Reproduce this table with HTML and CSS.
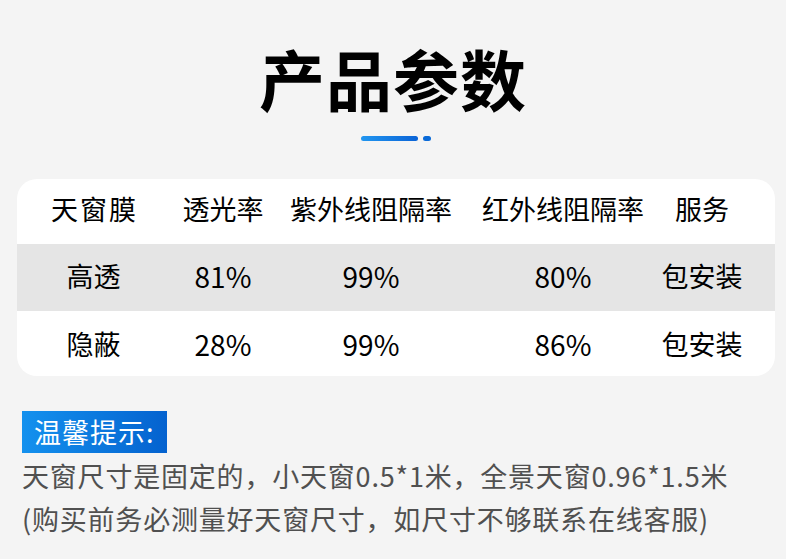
FILE: index.html
```html
<!DOCTYPE html>
<html lang="zh">
<head>
<meta charset="utf-8">
<link rel="stylesheet" href="styles.css">
</head>
<body>
<div class="page">
  <h1 class="title">产品参数</h1>
  <div class="deco"><span class="bar"></span><span class="dot"></span></div>
  <div class="card">
    <div class="row head">
      <div class="c sp">天窗膜</div><div class="c">透光率</div><div class="c">紫外线阻隔率</div><div class="c">红外线阻隔率</div><div class="c">服务</div>
    </div>
    <div class="row gray">
      <div class="c">高透</div><div class="c num">81%</div><div class="c num">99%</div><div class="c num">80%</div><div class="c">包安装</div>
    </div>
    <div class="row last">
      <div class="c">隐蔽</div><div class="c num">28%</div><div class="c num">99%</div><div class="c num">86%</div><div class="c">包安装</div>
    </div>
  </div>
  <div class="tips">
    <div class="badge">温馨提示:</div>
    <p class="note first">天窗尺寸是固定的，小天窗0.5*1米，全景天窗0.96*1.5米</p>
    <p class="note">(购买前务必测量好天窗尺寸，如尺寸不够联系在线客服)</p>
  </div>
</div>
</body>
</html>
```
FILE: styles.css
```css
html, body {
  margin: 0;
  padding: 0;
  background: #f4f4f4;
}
body {
  font-family: "Noto Sans CJK SC", "Noto Sans", sans-serif;
  width: 786px;
  height: 559px;
  overflow: hidden;
}
.page {
  display: flex;
  flex-direction: column;
  padding: 0 11px 0 17px;
}
.title {
  margin: 34px 0 0;
  font-size: 66px;
  line-height: 86px;
  font-weight: 700;
  text-align: center;
  color: #000;
  letter-spacing: 1px;
  padding-right: 6px;
}
.deco {
  display: flex;
  justify-content: center;
  gap: 5px;
  margin-top: 16px;
  height: 5px;
}
.bar {
  width: 57px;
  height: 5px;
  border-radius: 3px;
  background: linear-gradient(90deg, #2196f0, #0a63d6);
}
.dot {
  width: 8px;
  height: 5px;
  border-radius: 3px;
  background: #0a6ad8;
}
.card {
  margin-top: 38px;
  background: #fff;
  border-radius: 20px;
  overflow: hidden;
  width: 758px;
}
.row {
  display: grid;
  grid-template-columns: 153px 106px 190px 194px 84px;
  align-items: center;
  font-size: 27px;
  color: #000;
}
.head { height: 65px; }
.head .c { margin-top: -5px; }
.gray { height: 67px; background: #e5e5e5; }
.gray .c { margin-top: -4px; }
.last { height: 65px; }
.c {
  text-align: center;
  white-space: nowrap;
  line-height: 32px;
}
.sp { letter-spacing: 2px; padding-left: 2px; }
.num { font-size: 28px; }
.tips {
  margin-top: 35px;
  padding-left: 5px;
  display: flex;
  flex-direction: column;
  align-items: flex-start;
}
.badge {
  height: 42px;
  width: 145px;
  box-sizing: border-box;
  padding-left: 12px;
  background: linear-gradient(90deg, #1491ee, #0462cf);
  color: #fff;
  font-size: 27px;
  line-height: 42px;
  letter-spacing: 1px;
}
.note {
  margin: 0;
  font-size: 27px;
  line-height: 43px;
  letter-spacing: 0.8px;
  color: #505050;
  white-space: nowrap;
}
.note.first { margin-top: 1px; }
```
